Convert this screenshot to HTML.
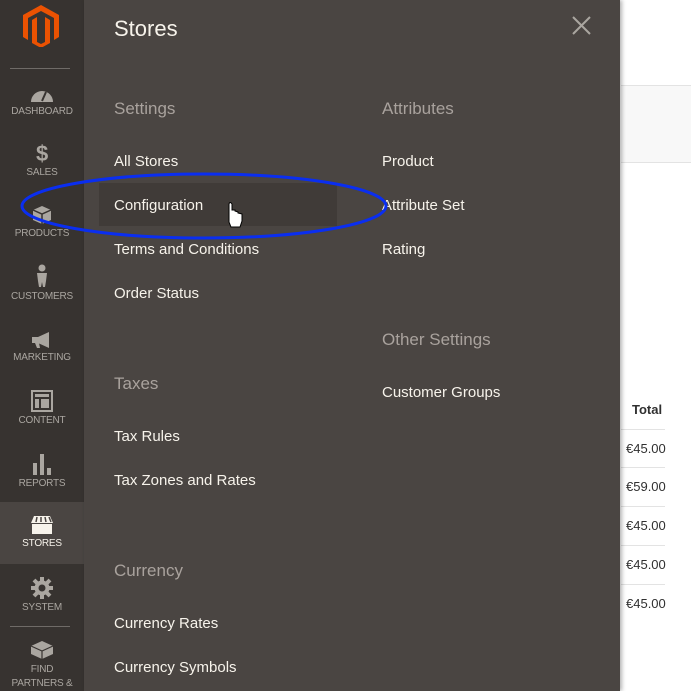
<!DOCTYPE html>
<html><head><style>
body{margin:0;width:691px;height:691px;overflow:hidden;background:#fff;font-family:"Liberation Sans",sans-serif;position:relative}
.a{position:absolute}
#side{left:0;top:0;width:84px;height:691px;background:#373330}
.it{position:absolute;left:0;width:84px;text-align:center;color:#aaa6a0;font-size:10px;letter-spacing:-0.2px}
.it svg{display:block;margin:0 auto 3px}
#panel{left:84px;top:0;width:536px;height:691px;background:#4a4542;box-shadow:2px 0 4px rgba(0,0,0,.3)}
.h{position:absolute;color:#a9a29d;font-size:17px}
.l{position:absolute;color:#f7f3eb;font-size:15px}
.tv{position:absolute;left:626px;font-size:13px;color:#303030}
.ln{position:absolute;left:621px;width:44px;height:1px;background:#e3e3e3}
</style></head><body>
<div class="a" style="left:621px;top:85px;width:70px;height:76px;background:#f8f8f8;border-top:1px solid #e3e3e3;border-bottom:1px solid #e3e3e3"></div>
<div class="a" style="left:632px;top:402px;font-size:13px;font-weight:bold;color:#303030">Total</div>
<div class="ln" style="top:429px"></div><div class="tv" style="top:441px">€45.00</div>
<div class="ln" style="top:467px"></div><div class="tv" style="top:479px">€59.00</div>
<div class="ln" style="top:506px"></div><div class="tv" style="top:518px">€45.00</div>
<div class="ln" style="top:545px"></div><div class="tv" style="top:557px">€45.00</div>
<div class="ln" style="top:584px"></div><div class="tv" style="top:596px">€45.00</div>

<div id="side" class="a">
<svg class="a" style="left:23px;top:5px" width="36" height="42" viewBox="0 0 36 42"><path d="M18 0L36 10V32L31 35V13L18 6L5 13V35L0 32V10Z M9 15L14 12V37L18 39L22 37V12L27 15V38L18 43L9 38Z" fill="#eb5202"/></svg>
<div class="a" style="left:10px;top:68px;width:60px;height:1px;background:#6f6b67"></div>
<div class="it" style="top:85px"><svg width="24" height="18" viewBox="0 0 24 18"><path d="M1 17A11 11 0 0 1 23 17Z" fill="#aaa6a0"/><path d="M12 16L16 7" stroke="#373330" stroke-width="2"/></svg>DASHBOARD</div>
<div class="it" style="top:143px"><div style="font-size:22px;font-weight:bold;line-height:22px;margin-bottom:2px">$</div>SALES</div>
<div class="it" style="top:205px"><svg width="20" height="20" viewBox="0 0 20 20"><path d="M10 1L19 5V15L10 19L1 15V5Z" fill="#aaa6a0"/><path d="M1 5L10 9L19 5M10 9V19" stroke="#373330" stroke-width="1.5" fill="none"/></svg>PRODUCTS</div>
<div class="it" style="top:264px"><svg width="12" height="24" viewBox="0 0 12 24"><circle cx="6" cy="4" r="3.5" fill="#aaa6a0"/><path d="M1 9H11L10 17L9 23H7L6 18L5 23H3L2 17Z" fill="#aaa6a0"/></svg>CUSTOMERS</div>
<div class="it" style="top:331px"><svg width="22" height="18" viewBox="0 0 22 18"><path d="M1 6H7L18 1V17L7 12H1Z M4 12H8L9 17H6Z" fill="#aaa6a0"/></svg>MARKETING</div>
<div class="it" style="top:390px"><svg width="22" height="22" viewBox="0 0 22 22"><rect x="1" y="1" width="20" height="20" fill="none" stroke="#aaa6a0" stroke-width="2"/><rect x="4" y="4" width="14" height="3" fill="#aaa6a0"/><rect x="4" y="9" width="4" height="9" fill="#aaa6a0"/><rect x="10" y="9" width="8" height="9" fill="#aaa6a0"/></svg>CONTENT</div>
<div class="it" style="top:453px"><svg width="20" height="22" viewBox="0 0 20 22"><rect x="1" y="10" width="4" height="12" fill="#aaa6a0"/><rect x="8" y="1" width="4" height="21" fill="#aaa6a0"/><rect x="15" y="15" width="4" height="7" fill="#aaa6a0"/></svg>REPORTS</div>
<div class="a" style="left:0;top:502px;width:84px;height:62px;background:#4a4542"></div>
<div class="it" style="top:515px;color:#f7f3eb"><svg width="24" height="20" viewBox="0 0 24 20"><path d="M4 1H20L23 8H1Z" fill="#f7f3eb"/><path d="M7 2L6 7M11 2V7M15 2L16 7M19 2L21 7" stroke="#4a4542" stroke-width="1.5"/><rect x="2" y="9" width="20" height="10" fill="#f7f3eb"/></svg>STORES</div>
<div class="it" style="top:577px"><svg width="22" height="22" viewBox="0 0 22 22"><circle cx="11" cy="11" r="7.5" fill="#aaa6a0"/><path d="M11 0V22M0 11H22M3 3L19 19M19 3L3 19" stroke="#aaa6a0" stroke-width="4"/><circle cx="11" cy="11" r="3.5" fill="#373330"/></svg>SYSTEM</div>
<div class="a" style="left:10px;top:626px;width:60px;height:1px;background:#6f6b67"></div>
<div class="it" style="top:638px;line-height:14px"><svg width="24" height="22" viewBox="0 0 24 22"><path d="M12 3L23 8V16L12 21L1 16V8Z" fill="#aaa6a0"/><path d="M1 8L12 13L23 8M12 13V21" stroke="#373330" stroke-width="1.2" fill="none"/></svg>FIND<br>PARTNERS &amp;</div>
</div>

<div id="panel" class="a"></div>
<div class="a" style="left:114px;top:16px;color:#f7f3eb;font-size:22px">Stores</div>
<svg class="a" style="left:572px;top:16px" width="19" height="19" viewBox="0 0 19 19"><path d="M1 1L18 18M18 1L1 18" stroke="#aaa6a0" stroke-width="2"/></svg>
<div class="h" style="left:114px;top:99px">Settings</div>
<div class="h" style="left:382px;top:99px">Attributes</div>
<div class="a" style="left:99px;top:183px;width:238px;height:43px;background:#403b38"></div>
<div class="l" style="left:114px;top:153px">All Stores</div>
<div class="l" style="left:114px;top:197px">Configuration</div>
<div class="l" style="left:114px;top:241px">Terms and Conditions</div>
<div class="l" style="left:114px;top:285px">Order Status</div>
<div class="l" style="left:382px;top:153px">Product</div>
<div class="l" style="left:382px;top:197px">Attribute Set</div>
<div class="l" style="left:382px;top:241px">Rating</div>
<div class="h" style="left:382px;top:330px">Other Settings</div>
<div class="l" style="left:382px;top:384px">Customer Groups</div>
<div class="h" style="left:114px;top:374px">Taxes</div>
<div class="l" style="left:114px;top:428px">Tax Rules</div>
<div class="l" style="left:114px;top:472px">Tax Zones and Rates</div>
<div class="h" style="left:114px;top:561px">Currency</div>
<div class="l" style="left:114px;top:615px">Currency Rates</div>
<div class="l" style="left:114px;top:659px">Currency Symbols</div>
<svg class="a" style="left:0;top:0" width="691" height="691"><ellipse cx="204" cy="206" rx="182" ry="32" fill="none" stroke="#0a2ef0" stroke-width="3"/>
<path d="M229 209V222L231 227H240L242 221V214L238 213V212L235 211V210L232 210V204Q230 201 229 204Z" fill="#fff" stroke="#000" stroke-width="1"/></svg>
</body></html>
